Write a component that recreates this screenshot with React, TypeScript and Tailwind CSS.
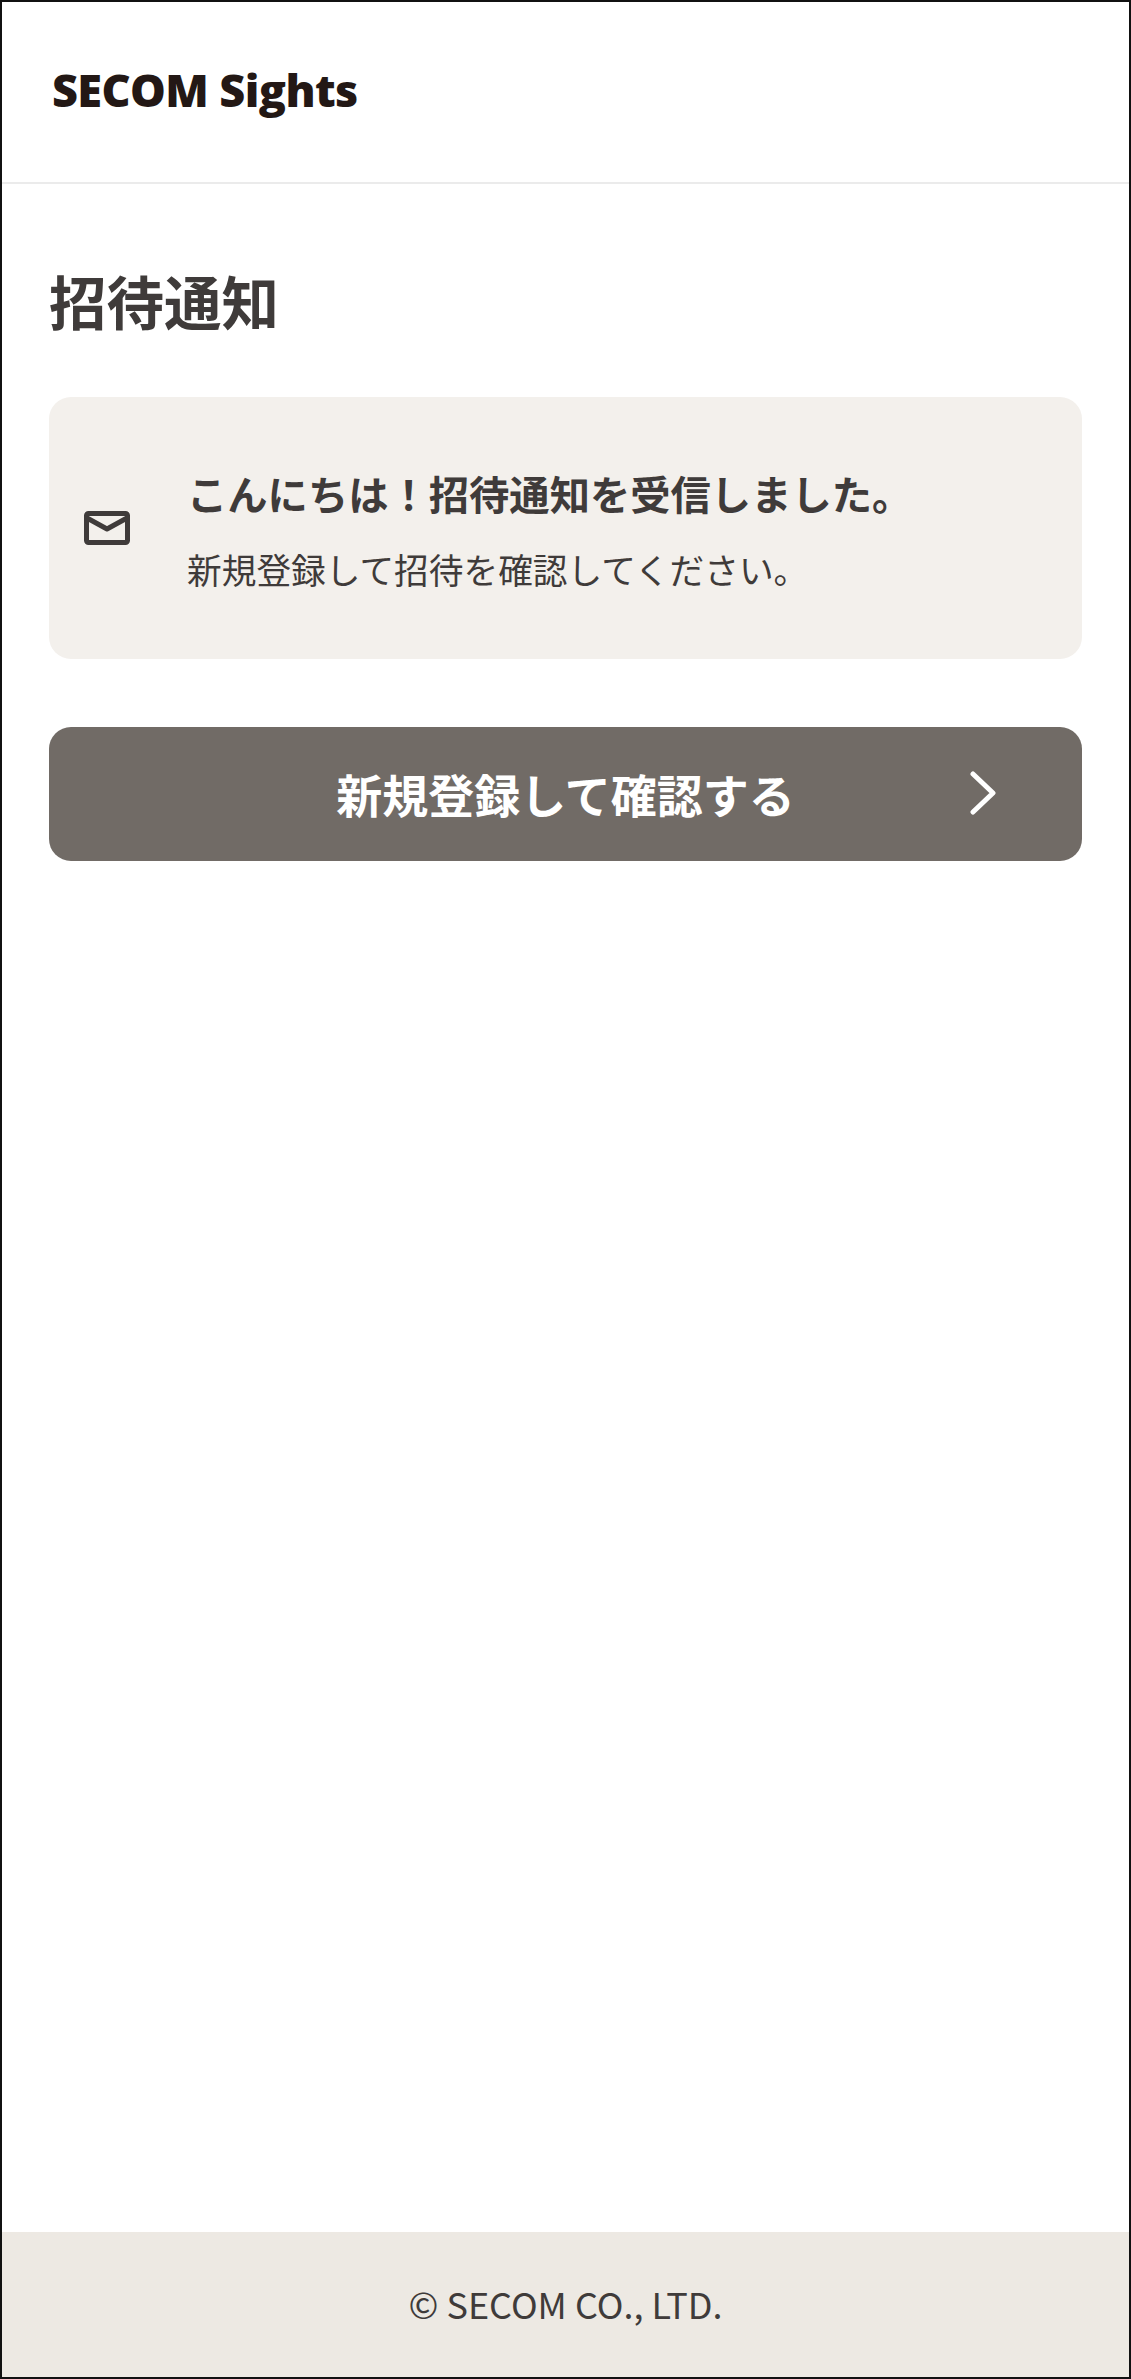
import React from "react";

const jpFont = "font-['Noto_Sans_CJK_JP','Noto_Sans',sans-serif]";

function MailIcon() {
  return (
    <svg width="46" height="34" viewBox="0 0 46 34" fill="none" stroke="#3f3b3a" strokeWidth="5" strokeLinejoin="round">
      <rect x="2.5" y="2.5" width="41" height="29" rx="2" />
      <path d="M3 7 L23 18 L43 7" />
    </svg>
  );
}

function ChevronRight() {
  return (
    <svg width="26" height="44" viewBox="0 0 26 44" fill="none" stroke="#ffffff" strokeWidth="5" strokeLinecap="round" strokeLinejoin="round">
      <path d="M3 3 L23 22 L3 41" />
    </svg>
  );
}

export default function App() {
  return (
    <div className={`${jpFont} flex h-[2379px] w-[1131px] flex-col border-2 border-[#111111] bg-white text-[#3f3b3a]`}>
      {/* Header */}
      <header className="flex h-[182px] items-center border-b-2 border-[#ebebeb] pb-[5px] pl-[50px]">
        <span className="font-['Open_Sans',sans-serif] text-[45px] font-extrabold leading-none tracking-[-0.6px] text-[#231815]">
          SECOM Sights
        </span>
      </header>

      {/* Main */}
      <main className="flex flex-1 flex-col px-[47px] pt-[69px]">
        <h1 className="text-[57.5px] font-bold leading-[94px]">招待通知</h1>

        <div className="mt-[50px] flex h-[262px] items-center rounded-[22px] bg-[#f3f0ec] pl-[35px]">
          <MailIcon />
          <div className="ml-[57px]">
            <p className="text-[40.3px] font-bold leading-[60px]">こんにちは！招待通知を受信しました。</p>
            <p className="mt-[21px] text-[34.7px] leading-[50px]">新規登録して招待を確認してください。</p>
          </div>
        </div>

        <button className="relative mt-[68px] flex h-[134px] w-full items-center justify-center rounded-[22px] bg-[#716b66] pb-[2px] text-[46px] font-bold text-white">
          新規登録して確認する
          <span className="absolute right-[86px] top-[44px]">
            <ChevronRight />
          </span>
        </button>
      </main>

      {/* Footer */}
      <footer className="flex h-[145px] items-center justify-center bg-[#ede9e3] pb-[3px] text-[36px]">
        © SECOM CO., LTD.
      </footer>
    </div>
  );
}
